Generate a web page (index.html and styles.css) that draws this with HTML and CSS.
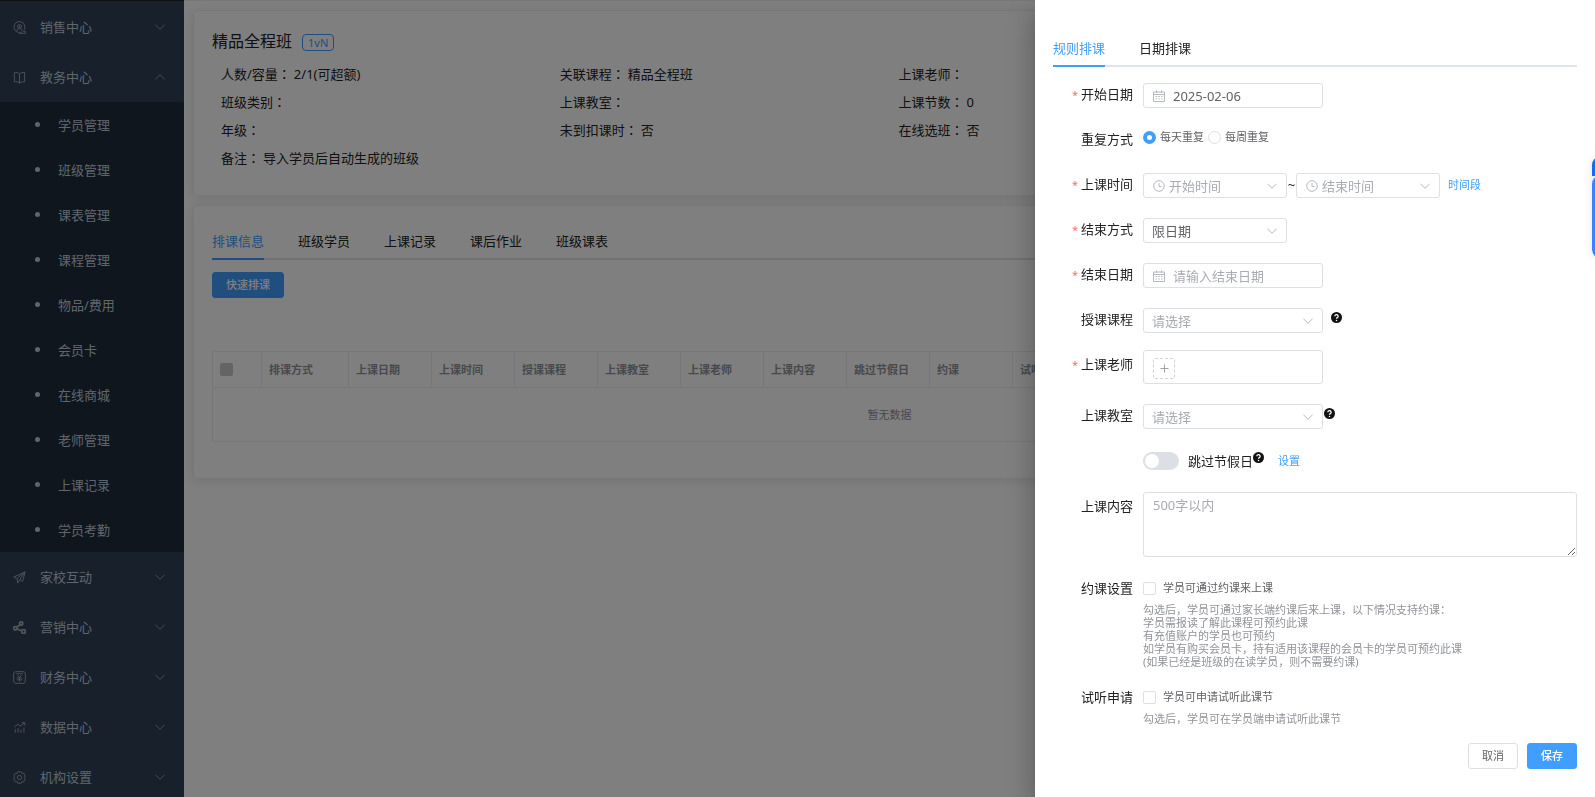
FILE: index.html
```html
<!DOCTYPE html>
<html lang="zh-CN">
<head>
<meta charset="utf-8">
<title>班级详情</title>
<link rel="stylesheet" href="styles.css">
</head>
<body>
<svg class="symbols" aria-hidden="true">
  <symbol id="i-down" viewBox="0 0 12 12"><path d="M1.5 3.8 6 8.3l4.500-4.500"/></symbol>
  <symbol id="i-up" viewBox="0 0 12 12"><path d="M1.500 8.200 6 3.700l4.500 4.500"/></symbol>
  <symbol id="i-cal" viewBox="0 0 12 12"><path d="M.5 2h11v9.500H.5zM.5 4.500h11M3.500.5v2.500M8.500.5v2.500M2.500 6.500h1.500M5.200 6.500h1.600M8 6.500h1.500M2.500 9h1.500M5.200 9h1.600M8 9h1.500"/></symbol>
  <symbol id="i-clock" viewBox="0 0 12 12"><circle cx="6" cy="6" r="5.300"/><path d="M6 3v3.500h2.500"/></symbol>
  <symbol id="i-help" viewBox="0 0 12 12"><circle cx="6" cy="6" r="6" fill="#111"/><path d="M4.200 4.700a1.800 1.700 0 1 1 2.700 1.400c-.6.400-.9.600-.9 1.300" fill="none" stroke="#fff" stroke-width="1.400"/><circle cx="6" cy="9.200" r=".8" fill="#fff"/></symbol>
</svg>

<div class="app">
  <nav class="sidebar">
    <a class="menu" href="#"><svg class="icon" viewBox="0 0 14 14"><path d="M9.500 11.800A5.900 5.900 0 1 1 12 9.500M6.500 13.300h7v-2.200h-2.700"/><circle cx="7" cy="6" r="2.200"/><path d="M4 10.500c.5-1.800 1.500-2.300 3-2.300s2.500.5 3 2.300M7 5v2M6 6h2"/></svg><span>销售中心</span><svg class="arrow"><use href="#i-down"/></svg></a>
    <a class="menu" href="#"><svg class="icon" viewBox="0 0 14 14"><path d="M7 3C5.500 1.700 3.500 1.500 1.500 1.700v10c2-.2 4 0 5.500 1.300 1.500-1.300 3.500-1.500 5.500-1.300v-10C10.500 1.500 8.500 1.700 7 3zM7 3v10"/></svg><span>教务中心</span><svg class="arrow"><use href="#i-up"/></svg></a>
    <ul class="submenu">
      <li><a href="#">学员管理</a></li>
      <li><a href="#">班级管理</a></li>
      <li><a href="#">课表管理</a></li>
      <li><a href="#">课程管理</a></li>
      <li><a href="#">物品/费用</a></li>
      <li><a href="#">会员卡</a></li>
      <li><a href="#">在线商城</a></li>
      <li><a href="#">老师管理</a></li>
      <li><a href="#">上课记录</a></li>
      <li><a href="#">学员考勤</a></li>
    </ul>
    <a class="menu" href="#"><svg class="icon" viewBox="0 0 14 14"><path d="M13 1 .8 6.500l3.200 1.700L13 1l-2.500 10-3.200-1.700L5.200 13 4.500 8.500M13 1 7.300 9.300"/></svg><span>家校互动</span><svg class="arrow"><use href="#i-down"/></svg></a>
    <a class="menu" href="#"><svg class="icon icon-strong" viewBox="0 0 14 14"><circle cx="8.800" cy="2.600" r="1.700"/><circle cx="2.500" cy="7.800" r="1.800"/><circle cx="11.300" cy="11.300" r="2"/><path d="M7.800 4 3.900 6.600M4.200 8.500l5.300 2"/></svg><span>营销中心</span><svg class="arrow"><use href="#i-down"/></svg></a>
    <a class="menu" href="#"><svg class="icon" viewBox="0 0 14 14"><rect x=".7" y=".7" width="12.600" height="12.600" rx="2.500"/><path d="M3.500 3h7M4.800 4.500 7 7l2.200-2.500M4 7.500h6M4 9.500h6M7 7v4.500"/></svg><span>财务中心</span><svg class="arrow"><use href="#i-down"/></svg></a>
    <a class="menu" href="#"><svg class="icon" viewBox="0 0 14 14"><path d="M1.500 6.500 5 3.500l3 2L12.500 2M9.500 1.800h3.200v3M2.500 12.500V9M5.500 12.500V7.500M8.500 12.500V9.500M11.800 12.500V7"/></svg><span>数据中心</span><svg class="arrow"><use href="#i-down"/></svg></a>
    <a class="menu" href="#"><svg class="icon" viewBox="0 0 14 14"><path d="M5.200.8h3.600l.7 1.700 1.900-.2 1.800 3.100L12.300 7l.9 1.600-1.800 3.100-1.900-.2-.7 1.700H5.200l-.7-1.700-1.900.2L.8 8.600 1.700 7 .8 5.400l1.800-3.100 1.900.2z"/><circle cx="7" cy="7" r="2.300"/></svg><span>机构设置</span><svg class="arrow"><use href="#i-down"/></svg></a>
  </nav>

  <main class="main">
    <section class="card">
      <header class="class-head"><h1>精品全程班</h1><span class="tag">1vN</span></header>
      <dl class="info">
        <div><dt>人数/容量<i>：</i></dt><dd>2/1(可超额)</dd></div>
        <div><dt>关联课程<i>：</i></dt><dd>精品全程班</dd></div>
        <div><dt>上课老师<i>：</i></dt><dd></dd></div>
        <div class="first"><dt>班级类别<i>：</i></dt><dd></dd></div>
        <div><dt>上课教室<i>：</i></dt><dd></dd></div>
        <div><dt>上课节数<i>：</i></dt><dd>0</dd></div>
        <div class="first"><dt>年级<i>：</i></dt><dd></dd></div>
        <div><dt>未到扣课时<i>：</i></dt><dd>否</dd></div>
        <div><dt>在线选班<i>：</i></dt><dd>否</dd></div>
        <div class="first"><dt>备注<i>：</i></dt><dd>导入学员后自动生成的班级</dd></div>
      </dl>
    </section>
    <section class="card">
      <div class="tabs" role="tablist">
        <button class="tab active" role="tab">排课信息</button>
        <button class="tab" role="tab">班级学员</button>
        <button class="tab" role="tab">上课记录</button>
        <button class="tab" role="tab">课后作业</button>
        <button class="tab" role="tab">班级课表</button>
      </div>
      <button class="btn btn-primary quick">快速排课</button>
      <table class="grid">
        <colgroup><col class="c-check"><col class="c-way"><col class="c-std" span="9"><col></colgroup>
        <thead><tr>
          <th><input type="checkbox" class="check-all" aria-label="全选" disabled></th>
          <th>排课方式</th><th>上课日期</th><th>上课时间</th><th>授课课程</th><th>上课教室</th><th>上课老师</th><th>上课内容</th><th>跳过节假日</th><th>约课</th><th>试听</th><th></th>
        </tr></thead>
        <tbody><tr><td colspan="12">暂无数据</td></tr></tbody>
      </table>
    </section>
  </main>
</div>

<div class="overlay"></div>

<aside class="drawer">
  <div class="tabs" role="tablist">
    <button class="tab active" role="tab">规则排课</button>
    <button class="tab" role="tab">日期排课</button>
  </div>
  <form class="form">
    <div class="row">
      <label class="label required" for="start">开始日期</label>
      <div class="field w-wide has-icon"><svg class="pre"><use href="#i-cal"/></svg><input class="control" id="start" type="text" value="2025-02-06"></div>
    </div>
    <div class="row">
      <span class="label" id="repeat">重复方式</span>
      <div class="radios" role="radiogroup" aria-labelledby="repeat">
        <input type="radio" name="repeat" id="daily" checked><label for="daily">每天重复</label>
        <input type="radio" name="repeat" id="weekly"><label for="weekly">每周重复</label>
      </div>
    </div>
    <div class="row">
      <label class="label required" for="from">上课时间</label>
      <div class="field w-std has-clock"><svg class="pre"><use href="#i-clock"/></svg><select class="control empty" id="from"><option>开始时间</option></select><svg class="suf"><use href="#i-down"/></svg></div>
      <span class="tilde">~</span>
      <div class="field w-std has-clock"><svg class="pre"><use href="#i-clock"/></svg><select class="control empty" aria-label="结束时间"><option>结束时间</option></select><svg class="suf"><use href="#i-down"/></svg></div>
      <a class="link gap-s" href="#">时间段</a>
    </div>
    <div class="row">
      <label class="label required" for="endway">结束方式</label>
      <div class="field w-std"><select class="control" id="endway"><option>限日期</option></select><svg class="suf"><use href="#i-down"/></svg></div>
    </div>
    <div class="row">
      <label class="label required" for="end">结束日期</label>
      <div class="field w-wide has-icon"><svg class="pre"><use href="#i-cal"/></svg><input class="control" id="end" type="text" placeholder="请输入结束日期"></div>
    </div>
    <div class="row tight">
      <label class="label" for="course">授课课程</label>
      <div class="field w-wide"><select class="control empty" id="course"><option>请选择</option></select><svg class="suf"><use href="#i-down"/></svg></div>
      <svg class="help gap-s"><use href="#i-help"/></svg>
    </div>
    <div class="row">
      <span class="label required low">上课老师</span>
      <div class="picker w-wide"><button type="button" class="add" aria-label="添加老师"><svg viewBox="0 0 10 10"><path d="M5 .5v9M.5 5h9"/></svg></button></div>
    </div>
    <div class="row">
      <label class="label" for="room">上课教室</label>
      <div class="field w-wide"><select class="control empty" id="room"><option>请选择</option></select><svg class="suf"><use href="#i-down"/></svg></div>
      <svg class="help gap-xs"><use href="#i-help"/></svg>
    </div>
    <div class="row short">
      <span class="label"></span>
      <div class="skip"><input class="switch" type="checkbox" role="switch" id="skip"><label for="skip">跳过节假日</label><svg class="help"><use href="#i-help"/></svg><a class="link" href="#">设置</a></div>
    </div>
    <div class="row">
      <label class="label low" for="content">上课内容</label>
      <textarea class="control area" id="content" placeholder="500字以内"></textarea>
    </div>
    <div class="row tight">
      <span class="label">约课设置</span>
      <div class="option">
        <div class="tick"><input type="checkbox" id="book"><label for="book">学员可通过约课来上课</label></div>
        <p class="hint">勾选后，学员可通过家长端约课后来上课，以下情况支持约课：<br>学员需报读了解此课程可预约此课<br>有充值账户的学员也可预约<br>如学员有购买会员卡，持有适用该课程的会员卡的学员可预约此课<br>(如果已经是班级的在读学员，则不需要约课)</p>
      </div>
    </div>
    <div class="row tight">
      <span class="label">试听申请</span>
      <div class="option">
        <div class="tick"><input type="checkbox" id="trial"><label for="trial">学员可申请试听此课节</label></div>
        <p class="hint">勾选后，学员可在学员端申请试听此课节</p>
      </div>
    </div>
    <div class="actions"><button type="button" class="btn">取消</button><button type="button" class="btn btn-primary">保存</button></div>
  </form>
</aside>
<div class="float-tool"><div class="float-top"></div><div class="float-body"></div></div>
</body>
</html>
```

FILE: styles.css
```css
* { box-sizing: border-box; }
html, body { height: 100%; }
body {
  margin: 0;
  overflow: hidden;
  font: 13px/22px "Noto Sans", "Noto Sans CJK SC", sans-serif;
  color: #222;
  background: #fff;
}
button, input, select, textarea { font: inherit; color: inherit; margin: 0; }
button { background: none; border: 0; padding: 0; cursor: pointer; }
a { text-decoration: none; }
/* Full-width colon centred in its box */
i {
  font-style: normal;
  font-family: "Noto Sans CJK TC", sans-serif;
  font-feature-settings: "locl" 0;
  line-height: 1;
}
svg { fill: none; stroke: currentColor; display: block; flex: none; }
.symbols { position: absolute; width: 0; height: 0; }

.app { display: flex; height: 100%; }
.sidebar {
  width: 184px;
  flex: none;
  padding-top: 1px;
  background: #304156;
  border-top: 1px solid #222;
  overflow: hidden;
}
.menu {
  display: flex;
  align-items: center;
  height: 50px;
  padding: 0 18px 0 13px;
  color: #bfcbd9;
}
.menu span { flex: 1; margin-left: 14px; }
.icon { width: 13px; height: 13px; color: #a0a8b4; }
.icon-strong { stroke-width: 2; }
.arrow { width: 12px; height: 12px; color: #909aa8; }
.submenu { list-style: none; margin: 0; padding: 0; background: #1f2d3d; }
.submenu a {
  display: flex;
  align-items: center;
  gap: 18px;
  height: 45px;
  padding-left: 35px;
  color: #bfcbd9;
}
.submenu a::before { content: ""; width: 5px; height: 5px; border-radius: 50%; background: #bfcbd9; }

.main {
  flex: 1;
  min-width: 0;
  display: flex;
  flex-direction: column;
  gap: 9px;
  padding: 9px 9px 0;
  border-top: 1px solid #eee;
}
.card {
  padding: 18px;
  border: 1px solid #ebeef5;
  border-radius: 4px;
  box-shadow: 0 2px 12px rgba(0, 0, 0, .1);
}
.card:first-child { padding-top: 17px; }
.class-head { display: flex; align-items: center; gap: 10px; height: 26px; }
h1 { margin: 0; font-size: 16px; font-weight: 400; }
.tag {
  margin-top: 2px;
  padding: 0 5px;
  border: 1px solid #409eff;
  border-radius: 4px;
  font-size: 11px;
  line-height: 15px;
  color: #409eff;
}
.info { display: grid; grid-template-columns: repeat(4, 1fr); margin: 6px 0 5px; }
.info div { display: flex; gap: 3px; height: 28px; padding: 3px 9px; white-space: nowrap; }
.info .first { grid-column-start: 1; }
.info dd { margin: 0; }

.tabs { display: flex; gap: 34px; border-bottom: 2px solid #dfe4ed; }
.tab { height: 36px; margin-bottom: -2px; border-bottom: 2px solid transparent; }
.tab.active { color: #409eff; border-color: #409eff; }
.btn {
  height: 26px;
  padding: 0 13px;
  border: 1px solid #dcdfe6;
  border-radius: 3px;
  font-size: 11px;
  line-height: 24px;
  color: #606266;
  background: #fff;
}
.btn-primary { color: #fff; background: #409eff; border-color: #409eff; font-weight: 500; }
.quick { display: block; margin-top: 12px; }
.grid {
  width: 100%;
  margin: 53px 0 18px;
  table-layout: fixed;
  border-collapse: collapse;
  font-size: 11px;
  line-height: 14px;
}
.c-check { width: 49px; }
.c-way { width: 87px; }
.c-std { width: 83px; }
.grid th, .grid td { border: 1px solid #ebeef5; padding: 0 7px; height: 36px; color: #909399; }
.grid th { text-align: left; white-space: nowrap; font-weight: 700; }
.grid td { height: 54px; text-align: center; }
.check-all {
  display: block;
  appearance: none;
  width: 13px;
  height: 13px;
  border-radius: 2px;
  background: #c8c9cc;
}

.overlay { position: fixed; inset: 0; background: rgba(0, 0, 0, .5); }
.drawer {
  position: fixed;
  inset: 0 0 0 auto;
  width: 560px;
  padding: 31px 18px 18px;
  background: #fff;
  box-shadow: 0 8px 10px -5px rgba(0, 0, 0, .2), 0 16px 24px 2px rgba(0, 0, 0, .14), 0 6px 30px 5px rgba(0, 0, 0, .12);
}
.form { padding-top: 16px; }
.row { display: flex; align-items: flex-start; margin-bottom: 20px; min-height: 25px; }
.row.tight { margin-bottom: 17px; }
.row.short { min-height: 23px; }
.label { width: 90px; flex: none; padding-right: 10px; text-align: right; }
.label.low { padding-top: 3px; }
.required::before { content: "*"; margin-right: 3px; font-size: 11px; color: #f56c6c; }
.w-wide { width: 180px; }
.w-std { width: 144px; }
.field { position: relative; flex: none; }
.control {
  display: block;
  width: 100%;
  height: 25px;
  padding: 0 8px;
  border: 1px solid #dcdfe6;
  border-radius: 3px;
  color: #606266;
  background: #fff;
  outline: 0;
  appearance: none;
}
.control.empty, .control::placeholder { color: #a8abb2; }
.has-icon .control { padding-left: 29px; }
.has-clock .control { padding-left: 25px; }
.pre, .suf { position: absolute; top: 7px; width: 12px; height: 12px; color: #b4b8c0; }
.pre { left: 10px; }
.suf { right: 9px; }
.tilde { width: 9px; line-height: 25px; text-align: center; }
.link { font-size: 11px; line-height: 24px; color: #409eff; }
.gap-s { margin-left: 8px; }
.gap-xs { margin-left: 1px; }
.help { width: 11px; height: 11px; margin-top: 4px; stroke: none; }
.radios { display: flex; align-items: center; height: 18px; font-size: 11px; color: #606266; }
.radios label { margin: 0 4px; }
input[type="radio"] {
  appearance: none;
  width: 13px;
  height: 13px;
  border: 1px solid #dcdfe6;
  border-radius: 50%;
  background: #fff;
}
input[type="radio"]:checked { border: 4px solid #409eff; }
.picker { height: 34px; padding: 7px 9px; border: 1px solid #dcdfe6; border-radius: 3px; }
.add {
  display: grid;
  place-items: center;
  width: 22px;
  height: 21px;
  border: 1px dashed #d0d3d9;
  border-radius: 2px;
  color: #999;
}
.add svg { width: 9px; height: 9px; }
.skip { display: flex; align-items: center; height: 23px; }
.skip label { margin-left: 9px; }
.skip .help { margin: 0 14px 6px 0; }
.switch {
  appearance: none;
  width: 36px;
  height: 18px;
  padding: 2px;
  border-radius: 9px;
  background: #dcdfe6;
}
.switch::before { content: ""; display: block; width: 14px; height: 14px; border-radius: 50%; background: #fff; }
.area { flex: 1; height: 65px; padding: 1px 9px; resize: vertical; }
.tick { display: flex; align-items: center; gap: 7px; height: 22px; font-size: 11px; color: #606266; }
.tick input {
  appearance: none;
  width: 13px;
  height: 13px;
  border: 1px solid #dcdfe6;
  border-radius: 2px;
  background: #fff;
}
.hint { margin: 4px 0 1px; font-size: 11px; line-height: 13px; color: #909399; }
.actions { display: flex; justify-content: flex-end; gap: 9px; }

.float-tool {
  position: fixed;
  top: 157px;
  right: -61px;
  width: 64px;
  border-radius: 8px;
  overflow: hidden;
  background: #e8f0ff;
  box-shadow: 0 0 10px rgba(0, 0, 0, .1);
}
.float-top { height: 19px; background: #1668f5; }
.float-body { height: 82px; border-radius: 8px 0 0 8px; background: #4080ff; }
```
